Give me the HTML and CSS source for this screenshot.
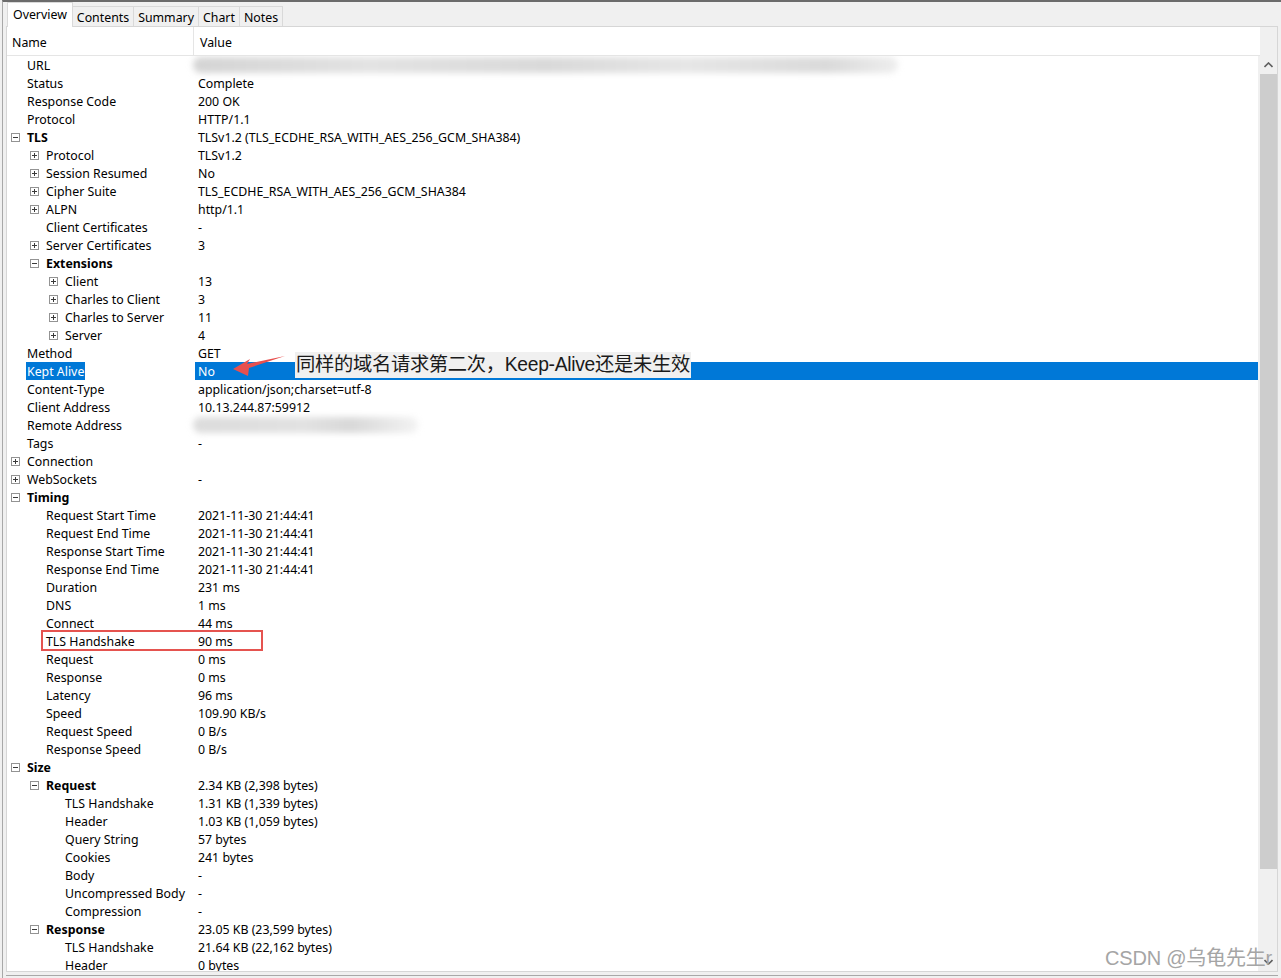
FILE: index.html
```html
<!DOCTYPE html>
<html>
<head>
<meta charset="utf-8">
<title>Overview</title>
<link rel="stylesheet" href="styles.css">
</head>
<body>
<div class="window">
  <div class="tabs">
    <div class="tab active">Overview</div>
    <div class="tab">Contents</div>
    <div class="tab">Summary</div>
    <div class="tab">Chart</div>
    <div class="tab">Notes</div>
  </div>
  <div class="panel">
    <div class="list">
      <div class="header">
        <div class="hname">Name</div>
        <div class="hvalue">Value</div>
      </div>
      <div class="rows">
        <div class="row l0"><div class="name"><span class="slot"></span><span class="label">URL</span></div><div class="value"><span class="blur blur-url"></span></div></div>
        <div class="row l0"><div class="name"><span class="slot"></span><span class="label">Status</span></div><div class="value">Complete</div></div>
        <div class="row l0"><div class="name"><span class="slot"></span><span class="label">Response Code</span></div><div class="value">200 OK</div></div>
        <div class="row l0"><div class="name"><span class="slot"></span><span class="label">Protocol</span></div><div class="value">HTTP/1.1</div></div>
        <div class="row l0 bold"><div class="name"><span class="slot"><span class="exp"></span></span><span class="label">TLS</span></div><div class="value">TLSv1.2 (TLS_ECDHE_RSA_WITH_AES_256_GCM_SHA384)</div></div>
        <div class="row l1"><div class="name"><span class="slot"><span class="exp plus"></span></span><span class="label">Protocol</span></div><div class="value">TLSv1.2</div></div>
        <div class="row l1"><div class="name"><span class="slot"><span class="exp plus"></span></span><span class="label">Session Resumed</span></div><div class="value">No</div></div>
        <div class="row l1"><div class="name"><span class="slot"><span class="exp plus"></span></span><span class="label">Cipher Suite</span></div><div class="value">TLS_ECDHE_RSA_WITH_AES_256_GCM_SHA384</div></div>
        <div class="row l1"><div class="name"><span class="slot"><span class="exp plus"></span></span><span class="label">ALPN</span></div><div class="value">http/1.1</div></div>
        <div class="row l1"><div class="name"><span class="slot"></span><span class="label">Client Certificates</span></div><div class="value">-</div></div>
        <div class="row l1"><div class="name"><span class="slot"><span class="exp plus"></span></span><span class="label">Server Certificates</span></div><div class="value">3</div></div>
        <div class="row l1 bold"><div class="name"><span class="slot"><span class="exp"></span></span><span class="label">Extensions</span></div><div class="value"></div></div>
        <div class="row l2"><div class="name"><span class="slot"><span class="exp plus"></span></span><span class="label">Client</span></div><div class="value">13</div></div>
        <div class="row l2"><div class="name"><span class="slot"><span class="exp plus"></span></span><span class="label">Charles to Client</span></div><div class="value">3</div></div>
        <div class="row l2"><div class="name"><span class="slot"><span class="exp plus"></span></span><span class="label">Charles to Server</span></div><div class="value">11</div></div>
        <div class="row l2"><div class="name"><span class="slot"><span class="exp plus"></span></span><span class="label">Server</span></div><div class="value">4</div></div>
        <div class="row l0"><div class="name"><span class="slot"></span><span class="label">Method</span></div><div class="value">GET</div></div>
        <div class="row l0 selected"><div class="name"><span class="slot"></span><span class="label">Kept Alive</span></div><div class="value">No</div>
          <svg class="arrow" width="60" height="26" viewBox="0 0 60 26"><path d="M4 17 L21 7 L18 12 L56 4 L20 16 L19 24 Z" fill="#e8504e"/></svg>
          <div class="note">同样的域名请求第二次，Keep-Alive还是未生效</div>
        </div>
        <div class="row l0"><div class="name"><span class="slot"></span><span class="label">Content-Type</span></div><div class="value">application/json;charset=utf-8</div></div>
        <div class="row l0"><div class="name"><span class="slot"></span><span class="label">Client Address</span></div><div class="value">10.13.244.87:59912</div></div>
        <div class="row l0"><div class="name"><span class="slot"></span><span class="label">Remote Address</span></div><div class="value"><span class="blur blur-remote"></span></div></div>
        <div class="row l0"><div class="name"><span class="slot"></span><span class="label">Tags</span></div><div class="value">-</div></div>
        <div class="row l0"><div class="name"><span class="slot"><span class="exp plus"></span></span><span class="label">Connection</span></div><div class="value"></div></div>
        <div class="row l0"><div class="name"><span class="slot"><span class="exp plus"></span></span><span class="label">WebSockets</span></div><div class="value">-</div></div>
        <div class="row l0 bold"><div class="name"><span class="slot"><span class="exp"></span></span><span class="label">Timing</span></div><div class="value"></div></div>
        <div class="row l1"><div class="name"><span class="slot"></span><span class="label">Request Start Time</span></div><div class="value">2021-11-30 21:44:41</div></div>
        <div class="row l1"><div class="name"><span class="slot"></span><span class="label">Request End Time</span></div><div class="value">2021-11-30 21:44:41</div></div>
        <div class="row l1"><div class="name"><span class="slot"></span><span class="label">Response Start Time</span></div><div class="value">2021-11-30 21:44:41</div></div>
        <div class="row l1"><div class="name"><span class="slot"></span><span class="label">Response End Time</span></div><div class="value">2021-11-30 21:44:41</div></div>
        <div class="row l1"><div class="name"><span class="slot"></span><span class="label">Duration</span></div><div class="value">231 ms</div></div>
        <div class="row l1"><div class="name"><span class="slot"></span><span class="label">DNS</span></div><div class="value">1 ms</div></div>
        <div class="row l1"><div class="name"><span class="slot"></span><span class="label">Connect</span></div><div class="value">44 ms</div></div>
        <div class="row l1 boxed"><div class="name"><span class="slot"></span><span class="label">TLS Handshake</span></div><div class="value">90 ms</div></div>
        <div class="row l1"><div class="name"><span class="slot"></span><span class="label">Request</span></div><div class="value">0 ms</div></div>
        <div class="row l1"><div class="name"><span class="slot"></span><span class="label">Response</span></div><div class="value">0 ms</div></div>
        <div class="row l1"><div class="name"><span class="slot"></span><span class="label">Latency</span></div><div class="value">96 ms</div></div>
        <div class="row l1"><div class="name"><span class="slot"></span><span class="label">Speed</span></div><div class="value">109.90 KB/s</div></div>
        <div class="row l1"><div class="name"><span class="slot"></span><span class="label">Request Speed</span></div><div class="value">0 B/s</div></div>
        <div class="row l1"><div class="name"><span class="slot"></span><span class="label">Response Speed</span></div><div class="value">0 B/s</div></div>
        <div class="row l0 bold"><div class="name"><span class="slot"><span class="exp"></span></span><span class="label">Size</span></div><div class="value"></div></div>
        <div class="row l1 bold"><div class="name"><span class="slot"><span class="exp"></span></span><span class="label">Request</span></div><div class="value">2.34 KB (2,398 bytes)</div></div>
        <div class="row l2"><div class="name"><span class="slot"></span><span class="label">TLS Handshake</span></div><div class="value">1.31 KB (1,339 bytes)</div></div>
        <div class="row l2"><div class="name"><span class="slot"></span><span class="label">Header</span></div><div class="value">1.03 KB (1,059 bytes)</div></div>
        <div class="row l2"><div class="name"><span class="slot"></span><span class="label">Query String</span></div><div class="value">57 bytes</div></div>
        <div class="row l2"><div class="name"><span class="slot"></span><span class="label">Cookies</span></div><div class="value">241 bytes</div></div>
        <div class="row l2"><div class="name"><span class="slot"></span><span class="label">Body</span></div><div class="value">-</div></div>
        <div class="row l2"><div class="name"><span class="slot"></span><span class="label">Uncompressed Body</span></div><div class="value">-</div></div>
        <div class="row l2"><div class="name"><span class="slot"></span><span class="label">Compression</span></div><div class="value">-</div></div>
        <div class="row l1 bold"><div class="name"><span class="slot"><span class="exp"></span></span><span class="label">Response</span></div><div class="value">23.05 KB (23,599 bytes)</div></div>
        <div class="row l2"><div class="name"><span class="slot"></span><span class="label">TLS Handshake</span></div><div class="value">21.64 KB (22,162 bytes)</div></div>
        <div class="row l2"><div class="name"><span class="slot"></span><span class="label">Header</span></div><div class="value">0 bytes</div></div>
      </div>
    </div>
    <div class="side">
      <div class="corner"></div>
      <div class="scrollbar">
        <div class="sbtn up"><svg width="9" height="6" viewBox="0 0 9 6"><path d="M0.5 5 L4.5 1 L8.5 5" fill="none" stroke="#606060" stroke-width="1.6"/></svg></div>
        <div class="track"><div class="thumb"></div></div>
        <div class="sbtn down"><svg width="9" height="6" viewBox="0 0 9 6"><path d="M0.5 1 L4.5 5 L8.5 1" fill="none" stroke="#606060" stroke-width="1.6"/></svg></div>
      </div>
    </div>
    <div class="watermark">CSDN @乌龟先生r</div>
  </div>
  <div class="footer"></div>
</div>
</body>
</html>
```

FILE: styles.css
```css
html, body {
  margin: 0;
  padding: 0;
}
body {
  width: 1281px;
  height: 978px;
  overflow: hidden;
  background: #f0f0f0;
  font-family: "Noto Sans", "Noto Sans CJK SC", sans-serif;
  font-size: 12.35px;
  color: #000;
}
.window {
  height: 976px;
  border-top: 2px solid #6b6b6b;
  margin-left: 2px;
  border-left: 1px solid #a8a8a8;
  padding-left: 3px;
  padding-right: 3px;
  display: flex;
  flex-direction: column;
}
.tabs {
  height: 24px;
  display: flex;
  align-items: flex-end;
  padding-left: 1px;
}
.tab {
  height: 20px;
  line-height: 18px;
  padding: 2px 4px 0;
  border: 1px solid #d9d9d9;
  border-bottom: none;
  margin-right: -1px;
  background: #f0f0f0;
  box-sizing: border-box;
}
.tab.active {
  height: 25px;
  line-height: 20px;
  padding: 2px 5px 0;
  background: #fff;
  position: relative;
  z-index: 1;
  margin-bottom: -1px;
}
.panel {
  position: relative;
  height: 946px;
  box-sizing: border-box;
  border: 1px solid #d6d6d6;
  background: #fff;
  display: flex;
  overflow: hidden;
}
.list {
  flex: 1;
  display: flex;
  flex-direction: column;
  min-width: 0;
}
.header {
  height: 28px;
  border-bottom: 1px solid #e5e5e5;
  display: flex;
  margin-right: -2px;
  position: relative;
  z-index: 1;
  background: #fff;
}
.hname {
  width: 187px;
  padding: 3px 0 0 5px;
  box-sizing: border-box;
  height: 28px;
  line-height: 25px;
  border-right: 1px solid #e5e5e5;
}
.hvalue {
  padding: 3px 0 0 6px;
  line-height: 25px;
}
.rows {
  flex: 1;
}
.row {
  height: 18px;
  display: flex;
  position: relative;
  white-space: nowrap;
}
.name {
  width: 188px;
  flex: none;
  display: flex;
  box-sizing: border-box;
}
.l0 .name { padding-left: 4px; }
.l1 .name { padding-left: 23px; }
.l2 .name { padding-left: 42px; }
.slot {
  width: 16px;
  flex: none;
  display: flex;
  align-items: center;
}
.label {
  display: block;
  height: 18px;
  box-sizing: border-box;
  padding: 2px 1px 0;
  line-height: 16px;
  margin-left: -1px;
}
.bold .label {
  font-weight: bold;
}
.value {
  flex: 1;
  height: 18px;
  box-sizing: border-box;
  padding: 2px 0 0 3px;
  line-height: 16px;
}
.selected .label,
.selected .value {
  background: #0078d7;
  color: #fff;
}
.exp {
  width: 9px;
  height: 9px;
  box-sizing: border-box;
  border: 1px solid #939393;
  position: relative;
  background: #fff;
}
.exp::before {
  content: "";
  position: absolute;
  left: 1px;
  top: 3px;
  width: 5px;
  height: 1px;
  background: #3a3a3a;
}
.exp.plus::after {
  content: "";
  position: absolute;
  left: 3px;
  top: 1px;
  width: 1px;
  height: 5px;
  background: #3a3a3a;
}
.blur {
  display: block;
  height: 16px;
  border-radius: 8px;
  filter: blur(3px);
  margin: -1px 0 0 -5px;
}
.blur-url {
  width: 705px;
  background: linear-gradient(90deg, #d4d4d4, #e3e3e3 25%, #d9d9d9 50%, #e6e6e6 70%, #dadada 90%, #eeeeee);
}
.blur-remote {
  width: 225px;
  background: linear-gradient(90deg, #dcdcdc, #e2e2e2 50%, #d8d8d8 70%, #f3f3f3);
}
.boxed::after {
  content: "";
  position: absolute;
  left: 34px;
  top: -2px;
  width: 222px;
  height: 21px;
  box-sizing: border-box;
  border: 2px solid #e5534f;
}
.arrow {
  position: absolute;
  left: 222px;
  top: -10px;
}
.note {
  position: absolute;
  left: 288px;
  top: -10px;
  height: 26px;
  line-height: 26px;
  padding: 0 1px;
  background: #f0f0f0;
  color: #1a1a1a;
  font-family: "Liberation Sans", "Noto Sans CJK SC", sans-serif;
  font-size: 19.3px;
  letter-spacing: -0.3px;
}
.side {
  width: 19px;
  flex: none;
  display: flex;
  flex-direction: column;
  background: #f0f0f0;
}
.corner {
  height: 29px;
  flex: none;
}
.scrollbar {
  flex: 1;
  display: flex;
  flex-direction: column;
  margin-left: 2px;
}
.sbtn {
  height: 18px;
  display: flex;
  align-items: center;
  justify-content: center;
  flex: none;
}
.track {
  flex: 1;
}
.thumb {
  height: 795px;
  background: #cdcdcd;
}
.watermark {
  position: absolute;
  right: 5px;
  bottom: 0;
  font-family: "Liberation Sans", "Noto Sans CJK SC", sans-serif;
  font-size: 20px;
  color: #a5a5a5;
  letter-spacing: -0.2px;
}
.footer {
  height: 3px;
  border-bottom: 1px solid #a8a8a8;
}
```
